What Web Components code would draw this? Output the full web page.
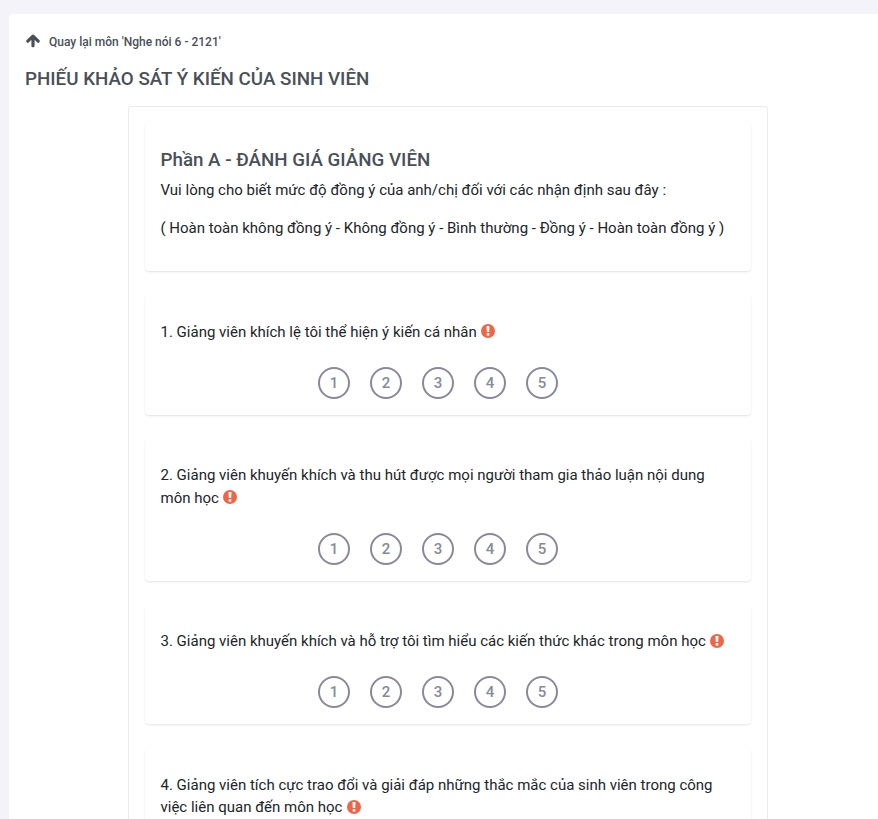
<!DOCTYPE html>
<html lang="vi"><head><meta charset="utf-8"><title>Phiếu khảo sát</title>
<style>
html{overflow:hidden}
body{margin:0;background:#f3f3f9;height:819px;overflow:hidden;font-family:Roboto,"Liberation Sans",sans-serif;color:#212529}
</style></head><body>
<survey-page></survey-page>
<script>
const define=(name,html)=>customElements.define(name,class extends HTMLElement{
 connectedCallback(){
  if(this.shadowRoot)return;
  this.attachShadow({mode:'open'}).innerHTML=html;
 }
});
define('back-link',`<style>
:host{display:flex;align-items:center;gap:8px;height:20px;font-size:12px;font-weight:500;color:#495057}
svg{display:block;width:16px;height:16px;margin-top:-2px}
</style><svg viewBox="0 0 16 16"><path d="M8 12.700V4M2.800 8.200 8 3.200l5.200 5" fill="none" stroke="#495057" stroke-width="3.200" stroke-linecap="round" stroke-linejoin="round"/></svg><span><slot></slot></span>`);
define('survey-card',`<style>
:host{display:block;box-sizing:border-box;padding:16px;border-radius:4px;background:#fff;box-shadow:0 1px 2px rgba(56,65,74,.15)}
</style><slot></slot>`);
define('required-mark',`<style>
:host{display:inline-block;width:14px;height:14px;margin-left:.6px;vertical-align:-1.5px}
svg{display:block}
</style><svg width="14" height="14" viewBox="0 0 14 14"><circle cx="7" cy="7" r="7" fill="#f06548"/><path d="M5.500 2.100h3l-.3 6h-2.400z" fill="#fff"/><path d="M5.700 9.100h2.600v2.500H5.700z" fill="#fff"/></svg>`);
define('rating-scale',`<style>
:host{display:flex;gap:20px;margin-left:157.5px}
span{box-sizing:border-box;width:32px;height:32px;border:2px solid #8a889a;border-radius:50%;display:flex;align-items:center;justify-content:center;font-size:15px;font-weight:500;color:#878a99}
</style><span>1</span><span>2</span><span>3</span><span>4</span><span>5</span>`);
define('survey-question',`<style>
:host{display:block}
:host([text-only]) rating-scale{display:none}
p{margin:9.5px 0 23.5px;font-size:15px;line-height:22.5px}
</style><survey-card><p><slot></slot> <required-mark></required-mark></p><rating-scale></rating-scale></survey-card>`);
define('survey-page',`<style>
:host{display:block;box-sizing:border-box;margin:14px 0 0 9px;height:805px;overflow:hidden;background:#fff;padding:18px 0 0 16px;border-radius:4px 0 0 0}
h1{margin:16px 0 16px;font-size:18.77px;line-height:22px;font-weight:500;color:#495057}
h2{margin:9.5px 0 8px;font-size:18.75px;line-height:22px;font-weight:500;color:#495057}
p{margin:0 0 16px;font-size:15px;line-height:22px}
main{box-sizing:border-box;width:640px;height:713px;margin-left:102.5px;padding:16px;border:1px solid #e9ebec;border-bottom:0;border-radius:4px 4px 0 0;display:flex;flex-direction:column;gap:24px;overflow:hidden}
main>*{flex:none}
.intro{height:148px}
</style><back-link>Quay lại môn 'Nghe nói 6 - 2121'</back-link>
<h1>PHIẾU KHẢO SÁT Ý KIẾN CỦA SINH VIÊN</h1>
<main><survey-card class="intro"><h2>Phần A - ĐÁNH GIÁ GIẢNG VIÊN</h2><p>Vui lòng cho biết mức độ đồng ý của anh/chị đối với các nhận định sau đây :</p><p>( Hoàn toàn không đồng ý - Không đồng ý - Bình thường - Đồng ý - Hoàn toàn đồng ý )</p></survey-card>
<survey-question>1. Giảng viên khích lệ tôi thể hiện ý kiến cá nhân</survey-question>
<survey-question>2. Giảng viên khuyến khích và thu hút được mọi người tham gia thảo luận nội dung môn học</survey-question>
<survey-question>3. Giảng viên khuyến khích và hỗ trợ tôi tìm hiểu các kiến thức khác trong môn học</survey-question>
<survey-question text-only>4. Giảng viên tích cực trao đổi và giải đáp những thắc mắc của sinh viên trong công việc liên quan đến môn học</survey-question></main>`);
</script></body></html>
